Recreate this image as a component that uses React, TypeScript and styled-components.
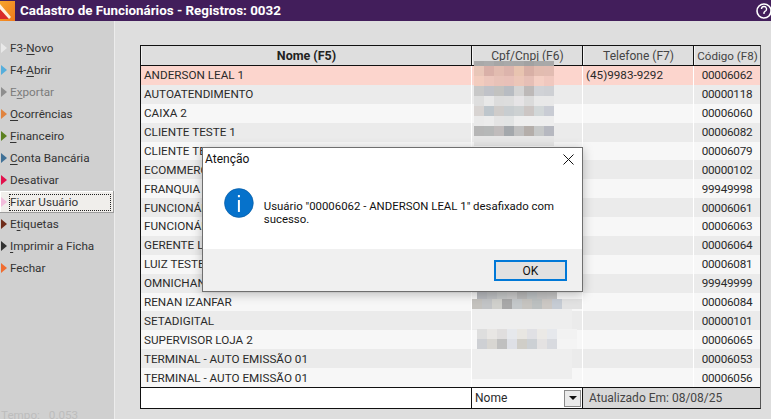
import styled, { createGlobalStyle } from 'styled-components'

const UI_FONT = 'Roboto, "Noto Sans", "Liberation Sans", sans-serif'

const GlobalStyle = createGlobalStyle`
    html, body {
        margin: 0;
        padding: 0;
        width: 771px;
        height: 419px;
        overflow: hidden;
        background: #dedede;
    }
    * {
        box-sizing: border-box;
    }
`

const Screen = styled.div`
    width: 771px;
    height: 419px;
    position: relative;
    overflow: hidden;
    display: flex;
    flex-direction: column;
    font-family: ${UI_FONT};
    font-size: 12px;
    color: #2a2a2a;
`

const TitleBar = styled.div`
    height: 21px;
    flex: none;
    display: flex;
    align-items: center;
    background: #421e5b;
    color: #fff;
    font-weight: 700;
    font-size: 13.4px;
    overflow: hidden;
`

const TitleText = styled.span`
    margin-left: 5px;
    flex: 1;
`

const Body = styled.div`
    flex: 1;
    display: flex;
    min-height: 0;
`

const Sidebar = styled.nav`
    width: 115px;
    flex: none;
    padding-top: 16px;
    background: #d0d0d0;
    border-right: 1px solid #ececec;
    display: flex;
    flex-direction: column;
    position: relative;
    font-size: 11.7px;
`

const MenuItem = styled.div<{ $focused?: boolean; $disabled?: boolean }>`
    height: 22px;
    display: flex;
    align-items: center;
    padding-left: 1px;
    gap: 3px;
    color: ${p => (p.$disabled ? '#7c7c7c' : '#333')};
    background: ${p => (p.$focused ? '#f0eeeb' : 'transparent')};
    box-shadow: ${p => (p.$focused ? 'inset -1px -1px 0 #9c9c9c, inset 1px 1px 0 #fff' : 'none')};
    u {
        text-underline-offset: 2px;
    }
`

const Arrow = styled.i<{ $color: string }>`
    width: 0;
    height: 0;
    flex: none;
    border-style: solid;
    border-width: 5.5px 0 5.5px 6px;
    border-color: transparent transparent transparent ${p => p.$color};
`

const FocusLabel = styled.span`
    outline: 1px dotted #222;
    outline-offset: 0;
    width: 100px;
    height: 15px;
    line-height: 15px;
`

const Timer = styled.div`
    position: absolute;
    left: 1px;
    bottom: -4px;
    color: #bdbdbd;
    word-spacing: 6px;
    line-height: 16px;
`

const Main = styled.main`
    flex: 1;
    padding: 24px 10px 10px 25px;
    background: #dedede;
`

const Table = styled.div`
    height: 364px;
    border: 1px solid #111;
    border-right-color: #555;
    display: flex;
    flex-direction: column;
`

const COLUMNS = '331px 111px 111px 66px'

const HeaderRow = styled.div`
    height: 20px;
    flex: none;
    display: grid;
    grid-template-columns: ${COLUMNS};
    border-bottom: 1px solid #111;
    background: #dedede;
`

const HeaderCell = styled.div<{ $bold?: boolean }>`
    display: flex;
    align-items: center;
    justify-content: center;
    font-weight: ${p => (p.$bold ? 700 : 400)};
    font-size: ${p => (p.$bold ? 12.5 : 12)}px;
    white-space: nowrap;
    overflow: hidden;
    border-right: 1px solid #111;
    border-left: 1px solid #f4f4f4;
    color: ${p => (p.$bold ? '#222' : '#444')};
    &:last-child {
        border-right: none;
        font-size: 11.6px;
    }
`

const Rows = styled.div`
    flex: 1;
    display: grid;
    grid-auto-rows: 1fr;
    font-size: 11.7px;
`

const Row = styled.div<{ $tone: 'selected' | 'odd' | 'even' }>`
    display: grid;
    grid-template-columns: ${COLUMNS};
    background: ${p => ({ selected: '#fcd5cd', odd: '#ebebeb', even: '#f7f7f7' }[p.$tone])};
`

const Cell = styled.div<{ $center?: boolean }>`
    display: flex;
    align-items: center;
    justify-content: ${p => (p.$center ? 'center' : 'flex-start')};
    padding-left: ${p => (p.$center ? 0 : 3)}px;
    letter-spacing: ${p => (p.$center ? -0.25 : 0)}px;
    border-right: 1px solid #fff;
    white-space: nowrap;
    overflow: hidden;
    &:last-child {
        border-right: none;
    }
`

const FooterRow = styled.div`
    height: 21px;
    flex: none;
    display: grid;
    grid-template-columns: 331px 111px 177px;
    border-top: 1px solid #111;
`

const FooterBlank = styled.div`
    background: #fff;
    border-right: 1px solid #111;
`

const SortSelect = styled.div`
    background: #fff;
    border-right: 1px solid #111;
    display: flex;
    align-items: center;
    justify-content: space-between;
    padding: 0 1px 0 3px;
`

const SelectButton = styled.span`
    width: 17px;
    height: 17px;
    background: #eaeaea;
    border: 1px solid #8a8a8a;
    display: flex;
    align-items: center;
    justify-content: center;
    &::after {
        content: '';
        border-style: solid;
        border-width: 4px 4px 0 4px;
        border-color: #111 transparent transparent transparent;
    }
`

const UpdatedAt = styled.div`
    background: #d8d8d8;
    display: flex;
    align-items: center;
    padding-left: 6px;
    color: #444;
`

const Mosaic = styled.svg`
    position: absolute;
    left: 465px;
    top: 60px;
    pointer-events: none;
`

const Dialog = styled.div`
    position: absolute;
    left: 202px;
    top: 147px;
    width: 381px;
    height: 145px;
    background: #fff;
    border: 1px solid #6f6f6f;
    box-shadow: 0 2px 10px rgba(0, 0, 0, 0.25);
    display: flex;
    flex-direction: column;
    color: #111;
`

const DialogHead = styled.div`
    height: 22px;
    flex: none;
    display: flex;
    align-items: center;
    justify-content: space-between;
    padding: 0 8px 0 2px;
`

const DialogContent = styled.div`
    flex: 1;
    display: flex;
    align-items: flex-start;
    gap: 10px;
    padding: 18px 20px 0 21px;
`

const DialogMessage = styled.p`
    margin: 0;
    padding-top: 2px;
    font-size: 11.4px;
    line-height: 13px;
    width: 300px;
    margin-top: 10px;
`

const DialogFoot = styled.div`
    height: 42px;
    flex: none;
    background: #f0f0f0;
    display: flex;
    align-items: center;
    justify-content: flex-end;
    padding: 0 15px 0 0;
`

const OkButton = styled.button`
    width: 73px;
    height: 21px;
    margin-top: 1px;
    border: 2px solid #0078d7;
    background: #e1e1e1;
    font: inherit;
    color: #111;
    padding: 0;
`

const MENU = [
    { color: '#e9e9e9', label: <>F3-<u>N</u>ovo</> },
    { color: '#55aedc', label: <>F4-<u>A</u>brir</> },
    { color: '#8e8e8e', label: <>E<u>x</u>portar</>, disabled: true },
    { color: '#e08440', label: <><u>O</u>corrências</> },
    { color: '#5b8020', label: <><u>F</u>inanceiro</> },
    { color: '#3f7096', label: <><u>C</u>onta Bancária</> },
    { color: '#e2104c', label: <>Desativar</> },
    { color: '#f2bcdc', label: <>Fixar Usuário</>, focused: true },
    { color: '#6e2c1a', label: <>E<u>t</u>iquetas</> },
    { color: '#333333', label: <><u>I</u>mprimir a Ficha</> },
    { color: '#f06c30', label: <>Fechar</> },
]

const ROWS = [
    { name: 'ANDERSON LEAL 1', phone: '(45)9983-9292', code: '00006062' },
    { name: 'AUTOATENDIMENTO', code: '00000118' },
    { name: 'CAIXA 2', code: '00006060' },
    { name: 'CLIENTE TESTE 1', code: '00006082' },
    { name: 'CLIENTE TESTE MOBILE', code: '00006079' },
    { name: 'ECOMMERCE', code: '00000102' },
    { name: 'FRANQUIA', code: '99949998' },
    { name: 'FUNCIONÁRIO 1', code: '00006061' },
    { name: 'FUNCIONÁRIO 2', code: '00006063' },
    { name: 'GERENTE LOJA', code: '00006064' },
    { name: 'LUIZ TESTE', code: '00006081' },
    { name: 'OMNICHANNEL', code: '99949999' },
    { name: 'RENAN IZANFAR', code: '00006084' },
    { name: 'SETADIGITAL', code: '00000101' },
    { name: 'SUPERVISOR LOJA 2', code: '00006065' },
    { name: 'TERMINAL - AUTO EMISSÃO 01', code: '00006053' },
    { name: 'TERMINAL - AUTO EMISSÃO 01', code: '00006056' },
]

// blurred documents: [top, height, first cell left, grey per 10px cell]
const BLUR: [number, number, number, string[]][] = [
    [1, 5, 9, ['#a9a9a9', '#acacac', '#a6a6a6', '#a9a9a9', '#a8a8a8', '#a2a2a2', '#a8a8a8', '#a9a9a9']],
    [6, 10, 9, ['#e8c6b8', '#d9b0a8', '#e2bcb0', '#dcb4ac', '#e8c4b0', '#d8b0a6', '#e2bcb0', '#e2bcb2']],
    [16, 10, 9, ['#f2ccbe', '#ecc6bc', '#e8c2b8', '#e8c0b8', '#ecc6b8', '#e6bfb6', '#f4cfc4', '#f0c8bf']],
    [26, 10, 9, ['#c8c8c8', '#c0c2c8', '#c2c2c0', '#b8bcc2', '#d4d4d4', '#bdb9b8', '#d0d2d6', '#ced0d4']],
    [36, 10, 9, ['#dedede', '#e8e8e8', '#dcdcdc', '#dddddd', '#e6e4e6', '#dbdbdb', '#e8e8e8', '#e8e8e8']],
    [46, 10, 9, ['#d8d4d2', '#bec6cc', '#cfccca', '#c8cdd0', '#cdd1d2', '#ccc6c4', '#d2d7d8', '#c9ccd4']],
    [56, 10, 9, ['#eaeaea', '#ececec', '#e4e4e4', '#e2e4e4', '#eeeeee', '#eeeeee', '#eeeeee', '#eeeeee']],
    [66, 10, 9, ['#b6b6b6', '#b6b8b8', '#c0bcbc', '#a4a8ac', '#c0c0c0', '#b4aeaa', '#c6c8c8', '#b6b8c0']],
    [76, 10, 9, ['#e6e6e6', '#e6e6e6', '#e6e6e6', '#e6e6e6', '#e6e6e6', '#e6e6e6', '#e6e6e6', '#e6e6e6']],
    [231, 8, 12, ['#b6b8bc', '#bcbec0', '#c4c6c6', '#c8c8c8', '#b8b8b8', '#bcc0c2', '#c2c2c2', '#c4c4c4']],
    [239, 10, 7, ['#c4c2be', '#c2c4c6', '#d0d0cc', '#a8a8a8', '#c4c8ca', '#c6c4c0', '#bcc0c0', '#ccc8c4', '#c6ccd4', '#e2e2e2', '#e2e2e2']],
    [249, 20, 7, ['#eeeeee', '#eeeeee', '#eeeeee', '#eeeeee', '#eeeeee', '#eeeeee', '#eeeeee', '#eeeeee', '#eeeeee', '#eeeeee']],
    [269, 10, 12, ['#dedede', '#e8e6e4', '#e0dede', '#e6e8ec', '#e8e6e2', '#e0e0e4', '#ebe9e6', '#e6e8ec', '#f2f2f2', '#f2f2f2']],
    [279, 10, 12, ['#ced0d4', '#d8d6d2', '#c0c0c0', '#dee0e6', '#d0cec8', '#ccd0d4', '#e4e2e2', '#d8dadf', '#f4f4f4', '#f4f4f4']],
    [289, 30, 7, ['#eeeeee', '#eeeeee', '#eeeeee', '#eeeeee', '#eeeeee', '#eeeeee', '#eeeeee', '#eeeeee', '#eeeeee', '#eeeeee']],
]

function BlurredColumn() {
    return <Mosaic width={125} height={330}>
        {BLUR.map(([top, height, left, cells]) => cells.map((fill, i) =>
            <rect key={`${top}-${i}`} x={left + i * 10} y={top} width={10} height={height} fill={fill} />
        ))}
    </Mosaic>
}

function AppLogo() {
    return <svg width={15} height={21} viewBox="0 0 15 21">
        <defs>
            <linearGradient id="logoFill" x1="0" y1="0" x2="1" y2="1">
                <stop offset="0" stopColor="#f6a52c" />
                <stop offset="1" stopColor="#f07a1c" />
            </linearGradient>
        </defs>
        <rect x={0} y={1} width={15} height={20} fill="url(#logoFill)" />
        <path d="M0 9 L9 19 L0 19 Z" fill="#d92a2a" />
        <path d="M0 4 L11 17 L9 19 L0 9 Z" fill="#fff" opacity={0.85} />
    </svg>
}

function HelpGlyph() {
    return <svg width={16} height={21} viewBox="0 0 16 21">
        <circle cx={9} cy={11} r={7} fill="none" stroke="#fff" strokeWidth={1.6} />
        <path d="M6.5 9 a2.5 2.5 0 1 1 3.5 2.3 L9 12.5 V14" fill="none" stroke="#fff" strokeWidth={1.4} />
    </svg>
}

function InfoIcon() {
    return <svg width={30} height={30} viewBox="0 0 30 30">
        <circle cx={15} cy={15} r={14.5} fill="#0672cb" stroke="#0a5a9e" strokeWidth={0.6} />
        <rect x={14} y={12} width={2} height={12} fill="#fff" />
        <rect x={14} y={7} width={2} height={2.2} fill="#fff" />
    </svg>
}

function CloseIcon() {
    return <svg width={11} height={11} viewBox="0 0 11 11">
        <path d="M0.5 0.5 L10.5 10.5 M10.5 0.5 L0.5 10.5" stroke="#111" strokeWidth={1} fill="none" />
    </svg>
}

export default function App() {
    return <Screen>
        <GlobalStyle />
        <TitleBar>
            <AppLogo />
            <TitleText>Cadastro de Funcionários - Registros: 0032</TitleText>
            <HelpGlyph />
        </TitleBar>
        <Body>
            <Sidebar>
                {MENU.map((item, index) => <MenuItem key={index} $focused={item.focused} $disabled={item.disabled}>
                    <Arrow $color={item.color} />
                    {item.focused ? <FocusLabel>{item.label}</FocusLabel> : <span>{item.label}</span>}
                </MenuItem>)}
                <Timer>Tempo: 0.053</Timer>
            </Sidebar>
            <Main>
                <Table>
                    <HeaderRow>
                        <HeaderCell $bold>Nome (F5)</HeaderCell>
                        <HeaderCell>Cpf/Cnpj (F6)</HeaderCell>
                        <HeaderCell>Telefone (F7)</HeaderCell>
                        <HeaderCell>Código (F8)</HeaderCell>
                    </HeaderRow>
                    <Rows>
                        {ROWS.map((row, index) => <Row key={index} $tone={index === 0 ? 'selected' : index % 2 ? 'odd' : 'even'}>
                            <Cell>{row.name}</Cell>
                            <Cell />
                            <Cell>{row.phone}</Cell>
                            <Cell $center>{row.code}</Cell>
                        </Row>)}
                    </Rows>
                    <FooterRow>
                        <FooterBlank />
                        <SortSelect>Nome<SelectButton /></SortSelect>
                        <UpdatedAt>Atualizado Em: 08/08/25</UpdatedAt>
                    </FooterRow>
                </Table>
            </Main>
        </Body>
        <BlurredColumn />
        <Dialog>
            <DialogHead>
                <span>Atenção</span>
                <CloseIcon />
            </DialogHead>
            <DialogContent>
                <InfoIcon />
                <DialogMessage>Usuário "00006062 - ANDERSON LEAL 1" desafixado com sucesso.</DialogMessage>
            </DialogContent>
            <DialogFoot>
                <OkButton>OK</OkButton>
            </DialogFoot>
        </Dialog>
    </Screen>
}
